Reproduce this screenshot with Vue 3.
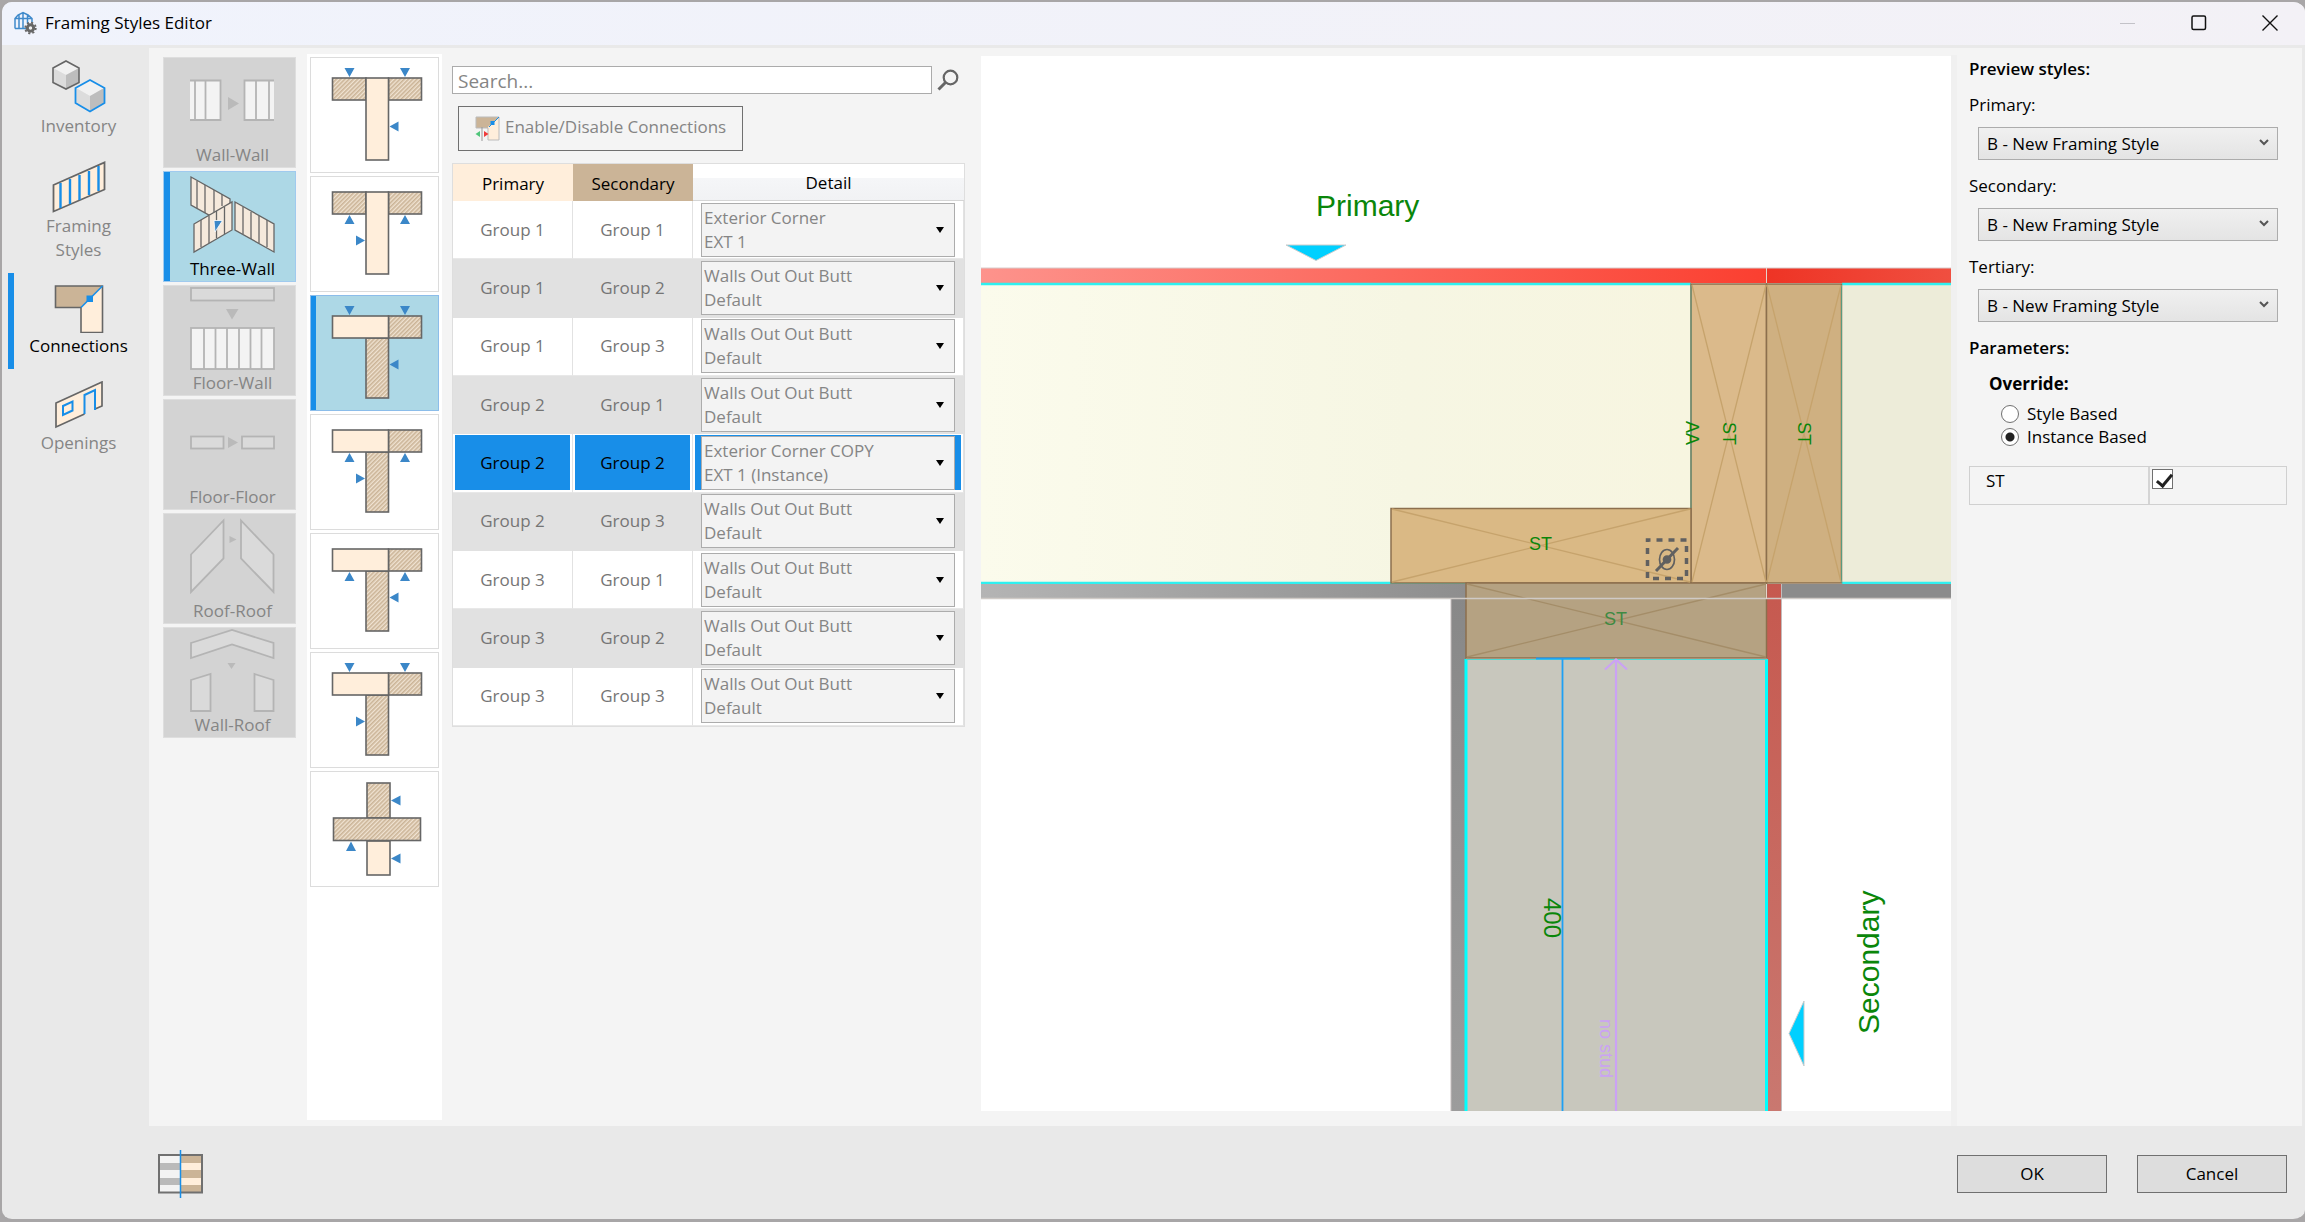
<script setup>
import { ref } from 'vue'

const activeNav = ref('Connections')
const activeType = ref('Three-Wall')
const activeLayout = ref(2)
const activeRow = ref(4)
const search = ref('')
const override = ref('instance')
const stud = ref(true)

const butt = ['Walls Out Out Butt', 'Default']
const rows = [
  ['Group 1', 'Group 1', 'Exterior Corner', 'EXT 1'],
  ['Group 1', 'Group 2', ...butt],
  ['Group 1', 'Group 3', ...butt],
  ['Group 2', 'Group 1', ...butt],
  ['Group 2', 'Group 2', 'Exterior Corner COPY', 'EXT 1 (Instance)'],
  ['Group 2', 'Group 3', ...butt],
  ['Group 3', 'Group 1', ...butt],
  ['Group 3', 'Group 2', ...butt],
  ['Group 3', 'Group 3', ...butt],
]

const types = ['Wall-Wall', 'Three-Wall', 'Floor-Wall', 'Floor-Floor', 'Roof-Roof', 'Wall-Roof']

// through: the stem runs past the bar; down: bar markers sit above it; left: stem marker points left
const layouts = [
  { through: true, down: true, left: true },
  { through: true, down: false, left: false },
  { through: false, down: true, left: true },
  { through: false, down: false, left: false },
  { through: false, down: false, left: true },
  { through: false, down: true, left: false },
  { cross: true },
]

const styleLabels = ['Primary', 'Secondary', 'Tertiary']
</script>

<template>
  <div class="window">
    <header class="titlebar">
      <svg class="app-icon" width="24" height="24" viewBox="0 0 24 24" fill="none">
        <path d="M2 17.500V7.500L5 4l5-2.500L15 4l4 3.500v4M2 17.500h11M2 7.500h17M6 4v13.500M10 1.500v16M14.500 4v8" stroke="#3f8acb" stroke-width="1.500" />
        <circle cx="17.500" cy="17" r="3.200" stroke="#666" stroke-width="3" fill="#eee" />
        <circle cx="17.500" cy="17" r="5.300" stroke="#666" stroke-width="1.800" stroke-dasharray="2.100 2.050" />
      </svg>
      <h1>Framing Styles Editor</h1>
      <div class="controls">
        <button type="button" aria-label="Minimize" disabled>
          <svg width="16" height="16" viewBox="0 0 16 16"><path d="M0 8.500h15" stroke="#c3c2c8" /></svg>
        </button>
        <button type="button" aria-label="Maximize">
          <svg width="16" height="16" viewBox="0 0 16 16"><rect x="1" y="1" width="13.500" height="13.500" rx="1.500" fill="none" stroke="#111" stroke-width="1.500" /></svg>
        </button>
        <button type="button" aria-label="Close">
          <svg width="16" height="16" viewBox="0 0 16 16"><path d="M.5.5l15 15M15.500.5l-15 15" stroke="#111" stroke-width="1.400" /></svg>
        </button>
      </div>
    </header>

    <div class="body">
      <nav class="side">
        <button type="button" :class="{ active: activeNav === 'Inventory' }" @click="activeNav = 'Inventory'">
          <svg width="54" height="53" viewBox="0 0 54 53">
            <path d="M14 1l13 7-13 7L1 8z" fill="#f1f1f1" /><path d="M1 8l13 7v14L1 22z" fill="#dcdcdc" /><path d="M27 8l-13 7v14l13-7z" fill="#bdbdbd" />
            <path d="M38 20l14 8-14 8-14-8z" fill="#f1f1f1" /><path d="M24 28l14 8v15l-14-8z" fill="#dcdcdc" /><path d="M52 28l-14 8v15l14-8z" fill="#bdbdbd" />
            <path d="M14 1l13 7v14.500l-13 6.500-13-6.500V8z" fill="none" stroke="#666" stroke-width="1.600" />
            <path d="M38 20l14.500 8v15L38 51.500 23.500 43V28z" fill="none" stroke="#188ee8" stroke-width="1.800" />
          </svg>
          <span>Inventory</span>
        </button>
        <button type="button" :class="{ active: activeNav === 'Framing Styles' }" @click="activeNav = 'Framing Styles'">
          <svg width="54" height="52" viewBox="0 0 54 52">
            <path d="M1.500 24L52.500 1.500v27L1.500 50.500z" fill="#ffeedb" stroke="#666" stroke-width="1.800" />
            <path d="M8.500 22v25M18 18v25M27.500 14v25M37 10v24M46.500 5v25" stroke="#188ee8" stroke-width="2.400" />
          </svg>
          <span>Framing<br>Styles</span>
        </button>
        <button type="button" :class="{ active: activeNav === 'Connections' }" @click="activeNav = 'Connections'">
          <svg width="50" height="48" viewBox="0 0 50 48">
            <path d="M1.500 1h47L27 22.500H1.500z" fill="#cbb497" />
            <path d="M27 22.500L48.500 1v46.500H27z" fill="#ffeedb" />
            <path d="M48.500 1h-47v21.500H27v25h21.500z" fill="none" stroke="#666" stroke-width="1.600" />
            <path d="M27 22.500L48.500 1" stroke="#188ee8" stroke-width="1.600" />
            <rect x="32.500" y="10.500" width="6.500" height="6.500" fill="#188ee8" />
          </svg>
          <span>Connections</span>
        </button>
        <button type="button" :class="{ active: activeNav === 'Openings' }" @click="activeNav = 'Openings'">
          <svg width="50" height="49" viewBox="0 0 50 49">
            <path d="M2 22L48 1v24l-7.500 3.500V9.500l-10 5v18.500L2 46z" fill="#ffeedb" />
            <path d="M41 28l7-3V1L2 22v24l28.500-13" fill="none" stroke="#666" stroke-width="1.700" />
            <path d="M30.500 33V14l10.500-5v20M9 25l9.500-4.500v9L9 34z" fill="none" stroke="#188ee8" stroke-width="2" />
          </svg>
          <span>Openings</span>
        </button>
      </nav>

      <main class="panel">
        <div class="types">
          <button v-for="t in types" :key="t" type="button" class="type" :class="{ active: t === activeType }" @click="activeType = t">
            <svg v-if="t === 'Wall-Wall'" viewBox="0 0 131 84">
              <path d="M26 22.500h31v39.500H26zM80 22.500h30v39.500H80z" fill="#f3f3f3" stroke="none" />
              <path d="M26 22.500h30.500v39.500H26M31 22v40M41.500 22v40M110 22.500H80.500v39.500H110M92 22v40M105 22v40" fill="none" />
              <path d="M64 39l11 6.500L64 52z" class="arrow" />
            </svg>
            <svg v-else-if="t === 'Three-Wall'" viewBox="0 0 131 84" class="three">
              <path d="M27 5l39 22v20l-7-2-14-2L27 33z" />
              <path d="M33 9v27M41 13v28M50 18v22M58 22v12" />
              <path d="M30 52l38-22v28L30 80z" />
              <path d="M37 48v27M45 44v27M52.500 39v27M60.500 35v27" />
              <path d="M71 30l39 22v28L71 58z" />
              <path d="M79 35v27M87 40v27M95 44v27M103 48v27" />
              <path d="M50 48.500h8.500L51 60z" fill="#3b87c8" stroke="#fff" stroke-width=".8" />
            </svg>
            <svg v-else-if="t === 'Floor-Wall'" viewBox="0 0 131 84">
              <rect x="27" y="2" width="83" height="12.500" />
              <path d="M62 23h12.500L68 33.500z" class="arrow" />
              <rect x="27" y="42" width="83" height="41" fill="#f3f3f3" />
              <path d="M40 42v41M51.500 42v41M63 42v41M75 42v41M86.500 42v41M97.500 42v41" />
            </svg>
            <svg v-else-if="t === 'Floor-Floor'" viewBox="0 0 131 84">
              <rect x="27" y="36.500" width="32.500" height="12" /><rect x="78" y="36.500" width="32" height="12" />
              <path d="M64 37l10 5.500L64 48z" class="arrow" />
            </svg>
            <svg v-else-if="t === 'Roof-Roof'" viewBox="0 0 131 84">
              <path d="M59.500 6.500v38L27 78V40.500zM77 6.500v38L109.500 78V40.500z" />
              <path d="M65.500 22l7 3.500-7 3.500z" class="arrow" />
            </svg>
            <svg v-else viewBox="0 0 131 84">
              <path d="M27 15L68 2l41.500 13v15L68 16.500 27 30zM27 52l19.500-6v37H27zM109.500 52l-19-6v37h19z" />
              <path d="M63.500 35h8L67.500 41z" class="arrow" />
            </svg>
            <span>{{ t }}</span>
          </button>
        </div>

        <div class="layouts">
          <svg class="defs" aria-hidden="true">
            <defs>
              <pattern id="hatch" width="3" height="3" patternUnits="userSpaceOnUse" patternTransform="rotate(45)">
                <rect width="3" height="3" fill="#f0e3d2" /><rect width="1.600" height="3" fill="#cbb497" />
              </pattern>
            </defs>
          </svg>
          <div class="stack">
            <button v-for="(l, i) in layouts" :key="i" type="button" class="layout" :class="{ active: i === activeLayout }" :aria-label="'Layout ' + (i + 1)" @click="activeLayout = i">
              <svg v-if="l.cross" viewBox="1 1 127 114">
                <rect x="57" y="12" width="23" height="35" class="hatched" />
                <rect x="57" y="70" width="23" height="34" />
                <rect x="23.500" y="47" width="87" height="22.500" class="hatched" />
                <path d="M81 29.500l9.500-5v10zM81 87.500l9.500-5v10zM41 70.500l-5 9.500h10z" class="mark" />
              </svg>
              <svg v-else viewBox="1 1 127 114">
                <g :transform="l.down ? 'translate(0 5)' : null">
                  <template v-if="l.through">
                    <rect x="22.500" y="16" width="33.500" height="22" class="hatched" />
                    <rect x="78.500" y="16" width="33" height="22" class="hatched" />
                    <rect x="56" y="16" width="22.500" height="82" />
                  </template>
                  <template v-else>
                    <rect x="56" y="38" width="22.500" height="60" class="hatched" />
                    <rect x="78.500" y="16" width="33" height="22" class="hatched" />
                    <rect x="22.500" y="16" width="56" height="22" />
                  </template>
                  <path v-if="l.down" d="M34.500 6h10l-5 9zM90 6h10l-5 9z" class="mark" />
                  <path v-else d="M34.500 48h10l-5-9zM90 48h10l-5-9z" class="mark" />
                  <path v-if="l.left" d="M79.500 64.500l9-5v10z" class="mark" />
                  <path v-else d="M55 64.500l-9-5v10z" class="mark" />
                </g>
              </svg>
            </button>
          </div>
        </div>

        <section class="list">
          <div class="search">
            <input v-model="search" type="text" placeholder="Search..." aria-label="Search">
            <button type="button" aria-label="Search">
              <svg width="22" height="22" viewBox="0 0 22 22" fill="none" stroke="#666">
                <circle cx="13.500" cy="8.500" r="6.800" stroke-width="2.200" /><path d="M8.500 13.500L1.500 20.500" stroke-width="3" />
              </svg>
            </button>
          </div>
          <button type="button" class="toggle">
            <svg width="25" height="25" viewBox="0 0 25 25">
              <path d="M1 1h23L13 12H1z" fill="#cbb497" /><path d="M13 11L24 1v23H13z" fill="#ffeedb" />
              <path d="M24 1H1v11h12v12h11z" fill="none" stroke="#bbb" />
              <path d="M14 11L24 1" stroke="#188ee8" /><rect x="15.500" y="5" width="4" height="4" fill="#188ee8" />
              <path d="M7 11v14" stroke="#999" /><path d="M5 15v6l-4.500-3z" fill="#4fc57a" /><path d="M9 15v6l4.500-3z" fill="#f03a3a" />
            </svg>
            <span>Enable/Disable Connections</span>
          </button>
          <table class="grid">
            <thead>
              <tr><th class="primary">Primary</th><th class="secondary">Secondary</th><th class="detail-head">Detail</th></tr>
            </thead>
            <tbody>
              <tr v-for="(r, i) in rows" :key="i" :class="{ active: i === activeRow }" @click="activeRow = i">
                <td><div class="cell">{{ r[0] }}</div></td>
                <td><div class="cell">{{ r[1] }}</div></td>
                <td>
                  <div class="cell holder">
                    <div class="combo">
                      <span>{{ r[2] }}<br>{{ r[3] }}</span>
                      <svg width="8" height="6" viewBox="0 0 8 6"><path d="M0 0h8L4 6z" /></svg>
                      <select :aria-label="'Detail for ' + r[0] + ' and ' + r[1]"><option>{{ r[2] }}, {{ r[3] }}</option></select>
                    </div>
                  </div>
                </td>
              </tr>
            </tbody>
          </table>
        </section>

        <div class="preview">
          <svg viewBox="981 56 970 1055" preserveAspectRatio="xMidYMid slice">
            <defs>
              <linearGradient id="brick"><stop offset="0" stop-color="#fd938c" /><stop offset="1" stop-color="#fb3f30" /></linearGradient>
              <linearGradient id="brick2"><stop offset="0" stop-color="#ee3425" /><stop offset="1" stop-color="#f04f40" /></linearGradient>
              <linearGradient id="brick3" x2="0" y2="1"><stop offset="0" stop-color="#c6594f" /><stop offset="1" stop-color="#c97870" /></linearGradient>
              <linearGradient id="infill"><stop offset="0" stop-color="#fbfbec" /><stop offset=".6" stop-color="#f6f6e3" /><stop offset="1" stop-color="#f7f5e0" /></linearGradient>
              <linearGradient id="board"><stop offset="0" stop-color="#b4b4b4" /><stop offset="1" stop-color="#8e8e8e" /></linearGradient>
              <linearGradient id="board2" x2="0" y2="1"><stop offset="0" stop-color="#888" /><stop offset="1" stop-color="#9c9c9c" /></linearGradient>
            </defs>
            <rect x="981" y="283" width="710" height="301" fill="url(#infill)" />
            <rect x="1842" y="283" width="109" height="301" fill="#edecd9" />
            <rect x="981" y="268" width="785" height="15" fill="url(#brick)" />
            <rect x="1767" y="268" width="184" height="15" fill="url(#brick2)" />
            <path d="M981 268h970" stroke="#d8cccc" />
            <path d="M981 284h710M981 583h485M1842 284h109M1842 583h109" stroke="#2ff0f0" stroke-width="2.500" />
            <rect x="981" y="584" width="485" height="14" fill="url(#board)" />
            <rect x="1781" y="584" width="170" height="14" fill="#8b8b8b" />
            <rect x="1451" y="598" width="15" height="513" fill="url(#board2)" />
            <rect x="1767" y="584" width="14" height="527" fill="url(#brick3)" />
            <path d="M1451 598v513M1781.500 584v527" stroke="#c4bcbc" />
            <rect x="1466" y="659" width="301" height="452" fill="#c8c7bd" />
            <path d="M1466 1111V659M1766.500 1111V659" stroke="#0ff" stroke-width="3" />
            <path d="M1466 659.500h301" stroke="#4fd8d4" />
            <g stroke="#8c6f4d" stroke-width="1.500">
              <rect x="1691" y="284" width="75.500" height="299" fill="#dbba8b" />
              <rect x="1766.500" y="284" width="75" height="299" fill="#cfb081" />
              <rect x="1391" y="508.500" width="300" height="74.500" fill="#dab985" />
              <rect x="1466" y="583" width="300.500" height="75" fill="#b5a282" />
            </g>
            <path d="M1691 285v223M1841.500 285v298" stroke="#5a9a80" />
            <path d="M1692 285l74 297M1766 285l-74 297M1767 285l74 297M1841 285l-74 297M1392 509l298 73M1690 509l-298 73" stroke="#c6a36c" stroke-width="1.300" />
            <path d="M1467 584l299 73M1766 584l-299 73" stroke="#a48d68" stroke-width="1.300" />
            <path d="M981 598.500h970" stroke="#cfcac6" stroke-width="1.500" />
            <path d="M1766.500 268v15M1766.500 584v15" stroke="#e4d4cc" />
            <path d="M1286 245h60l-30 15.500zM1804 1001v65l-15-32.500z" fill="#00d0ff" stroke="#ccc" />
            <path d="M1536 658.500h54M1562.500 659v452" stroke="#1ea0f5" stroke-width="1.800" />
            <path d="M1616 1111V660M1605 669.500l11-10 11 10" stroke="#cba2f4" stroke-width="2.200" fill="none" />
            <rect x="1647.500" y="540" width="39" height="38.500" fill="none" stroke="#606060" stroke-width="3.500" stroke-dasharray="6 6" stroke-dashoffset="3" />
            <g fill="none" stroke="#606060" stroke-width="1.700">
              <ellipse cx="1667" cy="559.500" rx="7.500" ry="10" /><path d="M1656 571l22-23" stroke-width="3" /><circle cx="1667" cy="559.500" r="3.500" fill="#606060" />
            </g>
            <g fill="#0a860a">
              <g font-size="30">
                <text x="1316" y="216">Primary</text>
                <text transform="translate(1879 1034) rotate(-90)">Secondary</text>
              </g>
              <text font-size="24" transform="translate(1544 898) rotate(90)">400</text>
              <g font-size="18">
                <text transform="translate(1686 421) rotate(90)">AA</text>
                <text transform="translate(1723 422) rotate(90)">ST</text>
                <text transform="translate(1798 422) rotate(90)">ST</text>
                <text x="1529" y="550">ST</text>
                <text x="1604" y="625" fill="#3e8a43">ST</text>
                <text transform="translate(1600 1019) rotate(90)" fill="#cba2f4">no stud</text>
              </g>
            </g>
          </svg>
        </div>

        <aside class="props">
          <h2>Preview styles:</h2>
          <div v-for="s in styleLabels" :key="s" class="field">
            <label :for="s">{{ s }}:</label>
            <div class="select">
              <select :id="s"><option>B - New Framing Style</option></select>
              <svg width="10" height="7" viewBox="0 0 10 7"><path d="M1 1l4 4 4-4" fill="none" stroke="#555" stroke-width="2" /></svg>
            </div>
          </div>
          <h2>Parameters:</h2>
          <fieldset>
            <legend>Override:</legend>
            <label><input v-model="override" type="radio" name="override" value="style">Style Based</label>
            <label><input v-model="override" type="radio" name="override" value="instance">Instance Based</label>
          </fieldset>
          <div class="param">
            <label for="st">ST</label>
            <div><input id="st" v-model="stud" type="checkbox"></div>
          </div>
        </aside>
      </main>
    </div>

    <footer class="footer">
      <button type="button" class="swap" aria-label="Compare layers">
        <svg width="46" height="48" viewBox="0 0 46 48">
          <rect x="1" y="5" width="43" height="37.500" fill="#f3f3f3" />
          <path d="M2 13h21v7H2zM2 28h21v7H2z" fill="#bababa" />
          <path d="M23 6h21v37H23z" fill="#cbb497" /><path d="M23 13h20v7H23zM23 28h20v7H23z" fill="#ffeedb" />
          <rect x="1" y="5" width="43" height="37.500" fill="none" stroke="#707070" stroke-width="2" />
          <path d="M22.500 0v48" stroke="#188ee8" stroke-width="1.500" />
        </svg>
      </button>
      <button type="button" class="action">OK</button>
      <button type="button" class="action">Cancel</button>
    </footer>
  </div>
</template>

<style>
body { background: #a9a7a8; }
</style>

<style scoped>
.window, .window * { box-sizing: border-box; }
.window {
  height: 100vh;
  display: flex;
  flex-direction: column;
  border: 2px solid #a8a6a7;
  border-width: 2px 0 3px 2px;
  border-radius: 12px;
  background: #e9e9e9;
  overflow: hidden;
  font: 17px/24px "Open Sans", "Noto Sans", sans-serif;
  color: #000;
}
button { font: inherit; color: inherit; padding: 0; border: 0; background: none; }
svg { display: block; flex: none; }
h1, h2 { margin: 0; font-size: 17px; line-height: 24px; }
h1 { font-weight: 400; }
h2 { font-weight: 600; }

.titlebar { display: flex; align-items: center; height: 43px; padding-bottom: 2px; background: linear-gradient(90deg, #f0f3fc, #f3f1f6); }
.app-icon { margin: 0 8px 0 11px; }
.controls { margin-left: auto; display: flex; }
.controls button { width: 71px; height: 41px; display: grid; place-items: center; }

.body { flex: 1; min-height: 0; display: flex; padding: 3px 3px 0 0; }
.side { width: 147px; flex: none; display: flex; flex-direction: column; color: #858585; }
.side button { position: relative; display: flex; flex-direction: column; align-items: center; gap: 1px; padding: 12px 0 11px 6px; }
.side .active { color: #000; }
.side .active::before { content: ""; position: absolute; left: 6px; top: 0; bottom: 0; width: 6px; background: #188ee8; }

.panel { flex: 1; min-width: 0; display: flex; background: #f4f4f4; }

.types { width: 133px; flex: none; margin: 9px 11px 0 14px; display: flex; flex-direction: column; gap: 3px; color: #858585; }
.type { height: 111px; border: 1px solid #dedede; background: #d3d3d3; display: flex; flex-direction: column; gap: 1px; }
.type svg { width: 131px; height: 84px; fill: #dadada; stroke: #b4b4b4; stroke-width: 1.8; }
.type span { padding-left: 6px; width: 100%; text-align: center; }
.type .arrow { fill: #bababa; stroke: none; }
.type.active { background: #add8e6; border-color: #a0caee; box-shadow: inset 6px 0 #188ee8; color: #000; }
.type .three { fill: #f5e9dc; stroke: #666; stroke-width: 1.3; }

.layouts { width: 135px; flex: none; margin: 6px 10px 6px 0; padding: 3px; background: #fff; }
.stack { height: 827px; display: grid; grid-auto-rows: 1fr; gap: 3px; }
.defs { position: absolute; width: 0; height: 0; }
.layout { border: 1px solid #dcdcdc; }
.layout svg { width: 100%; height: 100%; fill: #ffeedb; stroke: #666; stroke-width: 1.6; }
.layout .hatched { fill: url(#hatch); }
.layout .mark { fill: #3b87c8; stroke: none; }
.layout.active { background: #add8e6; border-color: #8cbdea; box-shadow: inset 5px 0 #188ee8; }

.list { width: 513px; flex: none; padding-top: 18px; color: #858585; }
.search { display: flex; align-items: center; gap: 5px; }
.search input { width: 480px; height: 28px; border: 1px solid #ababab; padding: 2px 5px 0; font: inherit; font-size: 19px; background: #fff; outline: none; }
.search input::placeholder { color: #858585; opacity: 1; }
.toggle { display: flex; align-items: center; gap: 5px; width: 285px; height: 45px; margin: 12px 0 12px 6px; padding-left: 16px; border: 1px solid #707070; }
.toggle span { padding-bottom: 4px; white-space: nowrap; }

.grid { width: 513px; height: 564px; table-layout: fixed; border: 1px solid #dedede; border-collapse: separate; border-spacing: 0; background: #fff; }
.grid th { height: 37px; padding: 2px 0 0; font-weight: 400; color: #000; }
.grid .primary { width: 120px; background: #ffeedb; }
.grid .secondary { width: 120px; background: #cbb497; }
.grid .detail-head { background: linear-gradient(#fff 40%, #f5f6f8 40%, #f1f2f4); border-bottom: 1px solid #d5d5d5; }
.grid td { height: 58px; padding: 1px 2px; border-right: 1px solid #e2e2e2; border-bottom: 1px solid #e8e8e8; text-align: center; color: #757575; }
.grid tr:nth-child(even) td { background: #e1e1e1; border-color: #e1e1e1; }
.cell { height: 55px; display: grid; place-items: center; }
.grid .active .cell { background: #188ee8; color: #000; }
.holder { place-items: center stretch; padding: 0 6px; }
.combo { position: relative; height: 54px; display: flex; align-items: center; justify-content: space-between; padding: 0 10px 0 2px; border: 1px solid #acacac; background: #f3f3f3; text-align: left; color: #858585; }
.combo svg { fill: #000; }
.combo select { position: absolute; inset: 0; width: 100%; opacity: 0; }

.preview { flex: 1; min-width: 0; margin: 8px 0 15px 16px; background: #fff; }
.preview svg { width: 100%; height: 100%; font-family: "Liberation Sans", Arial, sans-serif; }

.props { width: 351px; flex: none; margin-top: 7px; padding: 2px 15px 0 12px; border-left: 6px solid #f0f0f0; }
.props h2 { margin-bottom: 12px; }
.field { margin-bottom: 14px; }
.field > label { display: block; }
.select { position: relative; width: 300px; margin: 10px 0 0 9px; }
.select select { appearance: none; width: 100%; height: 33px; padding: 0 8px; border: 1px solid #acacac; border-radius: 0; background: linear-gradient(#f0f0f0, #e4e4e4); font: inherit; color: #000; }
.select svg { position: absolute; right: 9px; top: 12px; }
fieldset { margin: 0; padding: 0 0 0 20px; border: 0; }
legend { padding: 0; font-weight: 700; }
fieldset label { display: flex; align-items: center; gap: 8px; height: 23px; padding-left: 12px; }
fieldset legend + label { margin-top: 6px; }
input[type="radio"] { appearance: none; width: 18px; height: 18px; margin: 0; border: 1px solid #707070; border-radius: 50%; background: #fff; }
input[type="radio"]:checked { background: radial-gradient(circle, #212121 4px, #fff 5px); }
.param { display: flex; height: 39px; margin-top: 18px; border: 1px solid #d0d0d0; }
.param label { width: 180px; padding: 2px 0 0 16px; border-right: 2px solid #d4d4d4; }
.param div { padding: 2px; }
.param input { appearance: none; position: relative; display: block; width: 21px; height: 20px; margin: 0; border: 1px solid #707070; background: #fff; }
.param input:checked::after { content: ""; position: absolute; left: 7px; top: 1px; width: 6px; height: 13px; border: solid #212121; border-width: 0 3px 3px 0; transform: rotate(40deg); }

.footer { height: 93px; flex: none; display: flex; align-items: center; gap: 30px; padding: 2px 18px 0 156px; }
.swap { margin-right: auto; }
.action { width: 150px; height: 38px; border: 1px solid #707070; background: #ddd; }
</style>
